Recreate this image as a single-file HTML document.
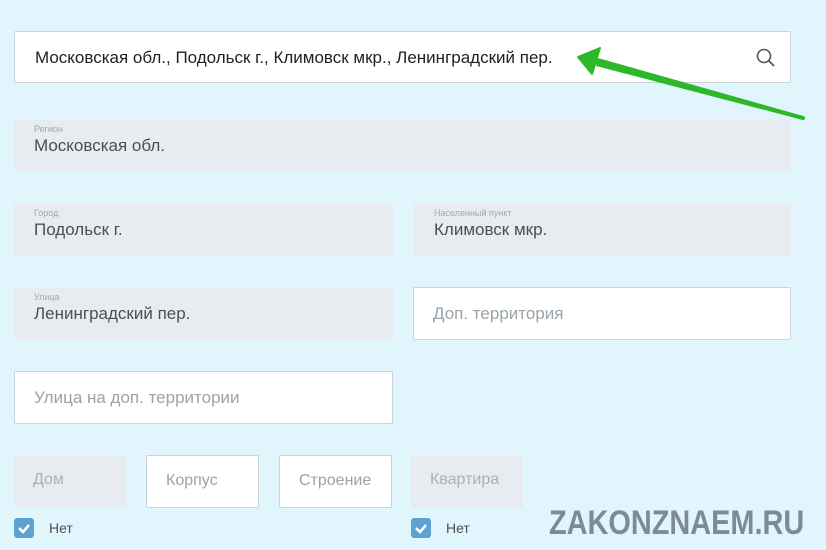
<!DOCTYPE html>
<html><head><meta charset="utf-8"><style>
*{margin:0;padding:0;box-sizing:border-box}
body{width:826px;height:550px;background:#e1f5fd;position:relative;overflow:hidden;font-family:"Liberation Sans",sans-serif}
.f{position:absolute;height:53px}
.g{background:#e8ecf0}
.w{background:#fff;border:1px solid #c9d3d9;border-radius:2px}
.lab{position:absolute;left:20px;top:5px;font-size:9px;color:#a0a8ae}
.val{position:absolute;left:20px;top:17px;font-size:17px;color:#4a4f53}
.ph{position:absolute;left:19px;top:16px;font-size:17px;color:#9aa3a9}
.cb{position:absolute;width:20px;height:20px;background:#5ea3cf;border-radius:3px}
.nt{position:absolute;font-size:14px;color:#4a4f53}
</style></head><body>
<div class="f w" style="left:14px;top:31px;width:777px;height:52px">
<div style="position:absolute;left:20px;top:16px;font-size:17px;color:#222">Московская обл., Подольск г., Климовск мкр., Ленинградский пер.</div>
<svg style="position:absolute;left:740px;top:15px" width="22" height="22" viewBox="0 0 22 22"><circle cx="9" cy="9" r="6.5" fill="none" stroke="#555" stroke-width="1.6"/><line x1="13.8" y1="13.8" x2="19" y2="19" stroke="#555" stroke-width="1.8"/></svg>
</div>
<div class="f g" style="left:14px;top:119px;width:777px"><div class="lab">Регион</div><div class="val">Московская обл.</div></div>
<div class="f g" style="left:14px;top:203px;width:379px"><div class="lab">Город</div><div class="val">Подольск г.</div></div>
<div class="f g" style="left:414px;top:203px;width:377px"><div class="lab">Населенный пункт</div><div class="val">Климовск мкр.</div></div>
<div class="f g" style="left:14px;top:287px;width:379px"><div class="lab">Улица</div><div class="val">Ленинградский пер.</div></div>
<div class="f w" style="left:413px;top:287px;width:378px"><div class="ph">Доп. территория</div></div>
<div class="f w" style="left:14px;top:371px;width:379px"><div class="ph">Улица на доп. территории</div></div>
<div class="f g" style="left:14px;top:455px;width:112px"><div class="ph" style="color:#a9b1b6;font-size:16px">Дом</div></div>
<div class="f w" style="left:146px;top:455px;width:113px"><div class="ph" style="font-size:16px">Корпус</div></div>
<div class="f w" style="left:279px;top:455px;width:113px"><div class="ph" style="font-size:16px">Строение</div></div>
<div class="f g" style="left:411px;top:455px;width:112px"><div class="ph" style="color:#a9b1b6;font-size:16px">Квартира</div></div>
<div class="cb" style="left:14px;top:518px"><svg width="20" height="20"><path d="M5 10l4 4 6-7" fill="none" stroke="#fff" stroke-width="2.5"/></svg></div>
<div class="nt" style="left:49px;top:520px">Нет</div>
<div class="cb" style="left:411px;top:518px"><svg width="20" height="20"><path d="M5 10l4 4 6-7" fill="none" stroke="#fff" stroke-width="2.5"/></svg></div>
<div class="nt" style="left:446px;top:520px">Нет</div>
<div style="position:absolute;left:549px;top:504px;font-size:34px;font-weight:bold;color:#7d8c94;transform:scaleX(0.85);transform-origin:0 0;white-space:nowrap">ZAKONZNAEM.RU</div>
<svg style="position:absolute;left:0;top:0" width="826" height="550"><polygon points="803,116 803,120 596,66 598,58" fill="#2db82a"/><line x1="803" y1="118" x2="592" y2="61" stroke="#2db82a" stroke-width="4" stroke-linecap="round"/><polygon points="578,57 600,48 592,74" fill="#2db82a" stroke="#2db82a" stroke-width="2" stroke-linejoin="round"/></svg>
</body></html>
